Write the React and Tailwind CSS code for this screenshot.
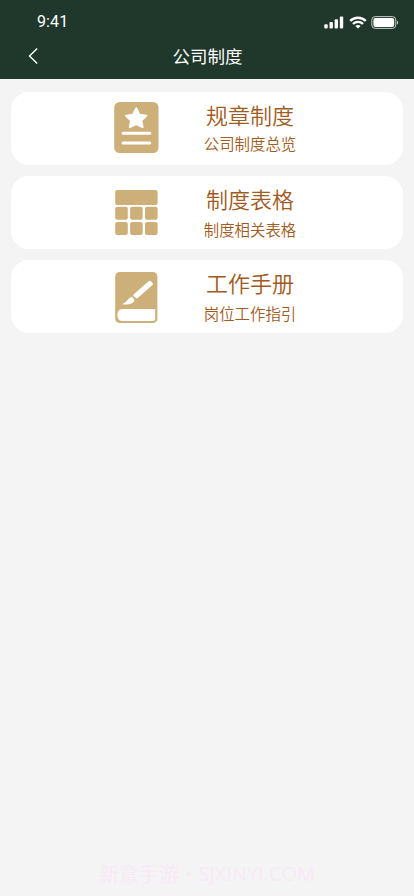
import React from "react";

function SignalIcon() {
  return (
    <svg width="20" height="13" viewBox="0 0 20 13" fill="white">
      <rect x="0.3" y="8.2" width="3.4" height="4.2" rx="1" />
      <rect x="5.5" y="6" width="3.4" height="6.4" rx="1" />
      <rect x="10.6" y="3.3" width="3.4" height="9.1" rx="1" />
      <rect x="15.8" y="0.5" width="3.4" height="11.9" rx="1" />
    </svg>
  );
}

function WifiIcon() {
  return (
    <svg width="18" height="13" viewBox="0 0 18 13" fill="none" stroke="white" strokeWidth="2.4">
      <path d="M1.2 4.9C5.5 0.6 12.5 0.6 16.8 4.9" />
      <path d="M4 8C6.8 5.2 11.2 5.2 14 8" />
      <path d="M9 12.6L6.4 10C7.9 8.7 10.1 8.7 11.6 10Z" fill="white" stroke="none" />
    </svg>
  );
}

function BatteryIcon() {
  return (
    <svg width="28" height="13" viewBox="0 0 28 13" fill="none">
      <rect x="0.8" y="0.6" width="24" height="11.8" rx="3.4" stroke="#c3cbc6" strokeWidth="1" />
      <rect x="2.4" y="2.1" width="20.8" height="8.8" rx="2" fill="white" />
      <path d="M26 4.4C27.5 5 27.5 8 26 8.6Z" fill="#c3cbc6" />
    </svg>
  );
}

function RulesIcon() {
  return (
    <svg width="48" height="56" viewBox="0 0 48 56">
      <rect x="2.2" y="2" width="44.3" height="51" rx="5.5" fill="#cdb079" />
      <path
        d="M24.2 8.2L27.4 14.8L34.4 15.7L29.3 20.6L30.6 27.2L24.2 24.1L17.8 27.2L19.1 20.6L14 15.7L21 14.8Z"
        fill="white"
        stroke="white"
        strokeWidth="2"
        strokeLinejoin="round"
      />
      <path d="M11 33.3H37.8M11 42.9H37.8" stroke="white" strokeWidth="3" strokeLinecap="round" />
    </svg>
  );
}

function TableIcon() {
  return (
    <svg width="48" height="56" viewBox="0 0 48 56" fill="#cdb079">
      <rect x="3.2" y="6" width="42.4" height="15" rx="2" />
      <rect x="3.2" y="22.8" width="12.6" height="13" rx="2" />
      <rect x="18.1" y="22.8" width="12.6" height="13" rx="2" />
      <rect x="33" y="22.8" width="12.6" height="13" rx="2" />
      <rect x="3.2" y="37.9" width="12.6" height="13" rx="2" />
      <rect x="18.1" y="37.9" width="12.6" height="13" rx="2" />
      <rect x="33" y="37.9" width="12.6" height="13" rx="2" />
    </svg>
  );
}

function ManualIcon() {
  return (
    <svg width="48" height="56" viewBox="0 0 48 56">
      <rect x="3.2" y="4" width="42.2" height="51" rx="4.5" fill="#cdb079" />
      <path d="M10 41H43.2V50.5Q43.2 53 40.7 53H10C3.8 53 3.8 41 10 41Z" fill="white" />
      <path d="M36.6 13.2Q37.6 12.2 38.6 13.1L40.6 15Q41.6 16 40.5 17L26 29.7Q24.6 30.8 23.3 29.6L21.6 28.1Q20.8 27.3 21.8 26.3Z" fill="white" />
      <path d="M20 28.8L22.4 31.4Q23.2 33.3 20.4 34.9Q16.8 37 10.2 36.3Q13.8 34.4 15.5 31.9Q17.5 29.4 20 28.8Z" fill="white" />
    </svg>
  );
}

const entries = [
  { title: "规章制度", subtitle: "公司制度总览", Icon: RulesIcon, spacing: "pt-[9px] gap-[2px]" },
  { title: "制度表格", subtitle: "制度相关表格", Icon: TableIcon, spacing: "pt-[9px] gap-[4px]" },
  { title: "工作手册", subtitle: "岗位工作指引", Icon: ManualIcon, spacing: "pt-[9px] gap-[4px]" },
];

function EntryCard({ title, subtitle, Icon, spacing }) {
  return (
    <button className="flex h-[73px] w-full rounded-[18px] bg-white pl-[101px] text-[#9f5b22]">
      <span className="pt-2">
        <Icon />
      </span>
      <span className={"ml-10 flex w-[100px] flex-col items-center whitespace-nowrap font-[350] " + spacing}>
        <span className="text-[22px] leading-[27px]">{title}</span>
        <span className="text-[15.4px] leading-[27px]">{subtitle}</span>
      </span>
    </button>
  );
}

export default function App() {
  return (
    <div className="flex h-[896px] w-[414px] flex-col overflow-hidden bg-[#f4f4f4] font-['Noto_Sans_CJK_SC',sans-serif]">
      <header className="h-[79px] bg-[#20372b] text-white">
        <div className="flex h-[34px] items-start justify-between pl-[37px] pr-[15px]">
          <span className="pt-[12px] font-[Roboto,sans-serif] text-[16px] leading-[20px] tracking-[0.1px]">9:41</span>
          <div className="flex gap-[4.5px] pt-[16px]">
            <SignalIcon />
            <WifiIcon />
            <BatteryIcon />
          </div>
        </div>
        <div className="grid h-[44px] grid-cols-[60px_1fr_60px] items-center">
          <button className="pl-[28px]" aria-label="返回">
            <svg width="12" height="18" viewBox="0 0 12 18" fill="none" stroke="white" strokeWidth="1.4">
              <path d="M9.2 1.5L1.5 9L9.2 16.5" />
            </svg>
          </button>
          <h1 className="pl-px text-center text-[17.5px] font-normal leading-[26px]">公司制度</h1>
        </div>
      </header>
      <main className="flex flex-1 flex-col gap-[11px] px-[11px] pt-[13px]">
        {entries.map((entry) => (
          <EntryCard key={entry.title} {...entry} />
        ))}
      </main>
      <footer className="flex h-[36px] items-start justify-center whitespace-nowrap text-[20px] leading-[28px] text-[#f8e9f7]">
        <span>新意手游</span>
        <span className="mx-[6px] font-['Open_Sans',sans-serif]">•</span>
        <span className="font-['Open_Sans',sans-serif] text-[20px]">SJXINYI.COM</span>
      </footer>
    </div>
  );
}
